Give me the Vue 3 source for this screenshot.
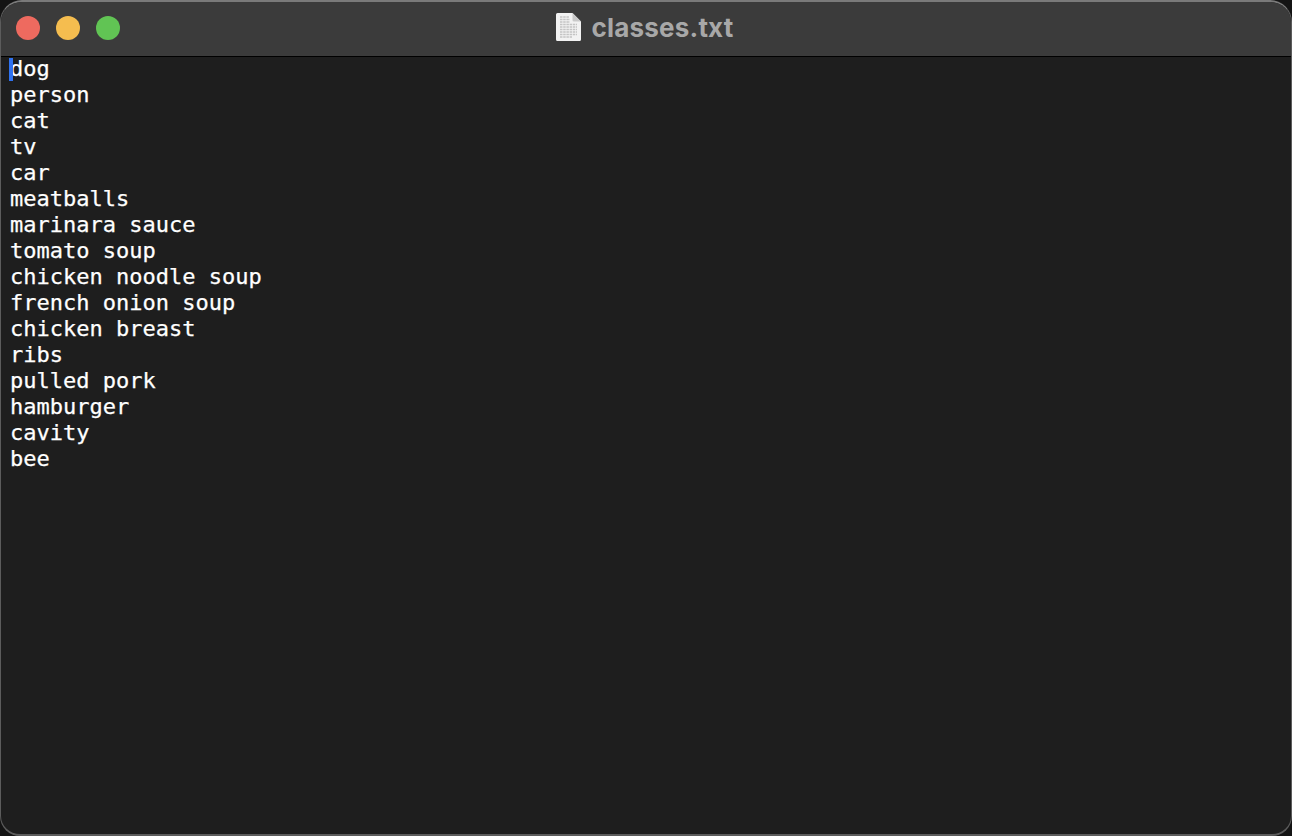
<script setup>
const lines = [
  'dog', 'person', 'cat', 'tv', 'car', 'meatballs', 'marinara sauce', 'tomato soup',
  'chicken noodle soup', 'french onion soup', 'chicken breast', 'ribs', 'pulled pork',
  'hamburger', 'cavity', 'bee',
]
</script>

<template>
  <div class="window">
    <header class="titlebar">
      <div class="lights">
        <span class="light red"></span>
        <span class="light yellow"></span>
        <span class="light green"></span>
      </div>
      <div class="title">
        <svg class="file-icon" width="25" height="28" viewBox="0 0 25 28" aria-hidden="true">
          <path d="M1.5 0h15L25 8.5V26.5a1.5 1.5 0 0 1-1.5 1.5H1.5A1.5 1.5 0 0 1 0 26.5V1.5A1.5 1.5 0 0 1 1.5 0z" fill="#f2f2f2" />
          <path d="M16.5 0L25 8.5h-7a1.5 1.5 0 0 1-1.5-1.5z" fill="#c9c9c9" />
          <path
            d="M4 4h9M4 6.5h10M4 9h10M4 11.5h17M4 14h17M4 16.5h17M4 19h17M4 21.5h17M4 24h12"
            stroke="#c4c4c4"
            stroke-width="1.3"
            stroke-dasharray="2.5 0.7"
          />
        </svg>
        <span class="title-text">classes.txt</span>
      </div>
    </header>
    <main class="editor">
      <div v-for="(line, i) in lines" :key="i" class="line">
        <span v-if="i === 0" class="caret"></span>{{ line }}
      </div>
    </main>
  </div>
</template>

<style>
html, body {
  margin: 0;
  background: #141414;
}
</style>

<style scoped>
.window {
  box-sizing: border-box;
  width: 1292px;
  height: 836px;
  display: flex;
  flex-direction: column;
  border-radius: 22px 22px 20px 20px;
  border: 1px solid #5c5c5c;
  border-top: 2px solid #7a7a7a;
  border-bottom: 2px solid #5c5c5c;
  background: #1e1e1e;
  overflow: hidden;
}

.titlebar {
  position: relative;
  flex: none;
  height: 55px;
  display: flex;
  align-items: center;
  justify-content: center;
  background: #3b3b3b;
  border-bottom: 1px solid #000;
  box-sizing: border-box;
}

.lights {
  position: absolute;
  left: 15px;
  top: 14px;
  display: flex;
  gap: 16px;
}

.light {
  width: 24px;
  height: 24px;
  border-radius: 50%;
}
.red { background: #ee6a5f; }
.yellow { background: #f5bd4f; }
.green { background: #61c454; }

.title {
  display: flex;
  align-items: center;
  gap: 11px;
  margin-top: -4px;
  margin-right: 3px;
}

.title-text {
  font-family: Inter, "Liberation Sans", Arial, sans-serif;
  font-weight: 700;
  font-size: 26px;
  letter-spacing: 0.2px;
  color: #a8a8a8;
}

.editor {
  flex: 1;
  padding: 0 9px;
  margin-top: -1px;
  font-family: "DejaVu Sans Mono", monospace;
  font-size: 22px;
  line-height: 26px;
  color: #fff;
  -webkit-text-stroke: 0.25px #fff;
}

.line {
  position: relative;
  height: 26px;
  white-space: pre;
}

.caret {
  position: absolute;
  left: -1px;
  top: 2px;
  width: 4px;
  height: 23px;
  background: #2f72f0;
}
</style>
